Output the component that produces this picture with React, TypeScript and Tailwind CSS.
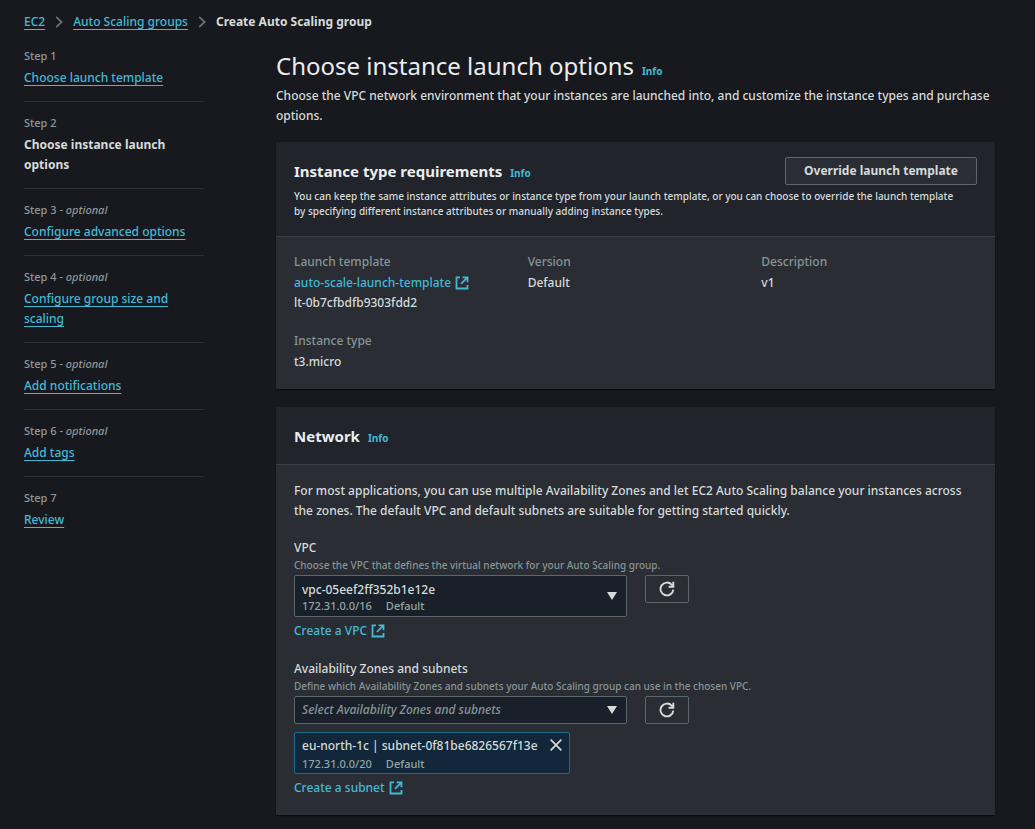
import type { ReactNode } from 'react'

type Step = { label: string; title: string; optional?: boolean; current?: boolean }

const steps: Step[] = [
  { label: 'Step 1', title: 'Choose launch template' },
  { label: 'Step 2', title: 'Choose instance launch options', current: true },
  { label: 'Step 3', title: 'Configure advanced options', optional: true },
  { label: 'Step 4', title: 'Configure group size and scaling', optional: true },
  { label: 'Step 5', title: 'Add notifications', optional: true },
  { label: 'Step 6', title: 'Add tags', optional: true },
  { label: 'Step 7', title: 'Review' },
]

const navLink = 'text-[#44b9d6] underline decoration-1 underline-offset-[3px] [text-decoration-skip-ink:none]'

function Chevron() {
  return (
    <svg aria-hidden="true" viewBox="0 0 8 12" className="mx-2.5 h-3 w-2 shrink-0" fill="none" stroke="#687078" strokeWidth="1.8">
      <path d="M1.2 .8 6.6 6 1.2 11.2" />
    </svg>
  )
}

function ExternalIcon() {
  return (
    <svg aria-hidden="true" viewBox="0 0 14 14" className="size-3.5 shrink-0" fill="none" stroke="currentColor" strokeWidth="1.8">
      <path d="M5 1.3H1.5v11.2h11V9" />
      <path d="M7.6 1.3h4.9v4.9M12.2 1.6 6 7.8" />
    </svg>
  )
}

function RefreshButton({ label }: { label: string }) {
  return (
    <button type="button" aria-label={label} className="flex h-7 w-11 items-center justify-center rounded-[2px] border border-[#5c666b] bg-[#2a2d34]">
      <svg aria-hidden="true" viewBox="0 0 16 16" className="size-4" fill="none" stroke="#d5dbdb" strokeWidth="1.9">
        <path d="M14.3 8.6A6.4 6.4 0 1 1 12.7 3.7l1.4 1.6" />
        <path d="M14.3 .8v4.9H9.6" />
      </svg>
    </button>
  )
}

function Info() {
  return (
    <a href="#info" className="text-[10px] leading-3 font-bold text-[#44b9d6]">
      Info
    </a>
  )
}

function ExternalLink({ children }: { children: ReactNode }) {
  return (
    <a href="#external" className="inline-flex items-center gap-1 font-medium text-[#44b9d6]">
      {children}
      <ExternalIcon />
    </a>
  )
}

function Card({ title, action, description, children }: { title: string; action?: ReactNode; description?: string; children: ReactNode }) {
  return (
    <section className="bg-[#2a2d34] shadow-[0_1px_1px_0_#0b0c0f]">
      <header className={`border-b border-[#3b4048] bg-[#21242b] px-[18px] pt-[15px] ${description ? 'pb-[17px]' : 'pb-3.5'}`}>
        <div className="flex h-7 items-center justify-between">
          <div className="flex items-baseline gap-2">
            <h2 className="text-[15px] leading-5 font-bold text-[#eaeded]">{title}</h2>
            <Info />
          </div>
          {action}
        </div>
        {description && <p className="mt-1 pr-3.5 text-[10px] leading-[15px] text-[#d5dbdb]">{description}</p>}
      </header>
      {children}
    </section>
  )
}

function Detail({ label, children }: { label: string; children: ReactNode }) {
  return (
    <div>
      <dt className="text-[#879596]">{label}</dt>
      <dd className="mt-px flex flex-col items-start">{children}</dd>
    </div>
  )
}

function Arrow() {
  return (
    <svg aria-hidden="true" viewBox="0 0 10 8" className="pointer-events-none absolute top-1/2 right-2.5 h-2 w-2.5 -translate-y-1/2" fill="#d5dbdb">
      <path d="M0 0h10L5 8z" />
    </svg>
  )
}

const fieldGrid = 'mt-0.5 grid grid-cols-2 items-start gap-[18px]'
const helper = 'text-[10px] leading-[15px] text-[#879596]'

export default function App() {
  return (
    <div className="min-h-screen bg-[#18191e] pt-3 pr-10 pb-3 pl-6 font-['Noto_Sans',sans-serif] text-xs leading-5 font-medium text-[#d5dbdb]">
      <nav aria-label="Breadcrumb" className="flex items-center">
        <a href="#ec2" className={navLink}>EC2</a>
        <Chevron />
        <a href="#groups" className={navLink}>Auto Scaling groups</a>
        <Chevron />
        <span className="font-bold">Create Auto Scaling group</span>
      </nav>

      <div className="flex gap-[72px]">
        <nav aria-label="Steps" className="mt-4 w-[180px] shrink-0">
          <ol>
            {steps.map((s) => (
              <li key={s.label} className="mb-[13px] border-b border-[#2f3138] pb-[13px] last:border-b-0">
                <p className="mb-1 text-[11px] leading-4 text-[#8d9899]">
                  {s.label}
                  {s.optional && <> - <i>optional</i></>}
                </p>
                {s.current ? (
                  <p aria-current="step" className="font-bold">{s.title}</p>
                ) : (
                  <p><a href="#step" className={navLink}>{s.title}</a></p>
                )}
              </li>
            ))}
          </ol>
        </nav>

        <main className="mt-[18px] min-w-0 flex-1">
          <div className="flex items-baseline gap-2">
            <h1 className="text-2xl leading-8 font-normal text-[#eaeded]">Choose instance launch options</h1>
            <Info />
          </div>
          <p className="mt-1 mb-4">
            Choose the VPC network environment that your instances are launched into, and customize the instance types and purchase options.
          </p>

          <div className="flex flex-col gap-[18px]">
            <Card
              title="Instance type requirements"
              description="You can keep the same instance attributes or instance type from your launch template, or you can choose to override the launch template by specifying different instance attributes or manually adding instance types."
              action={
                <button type="button" className="h-7 rounded-[2px] border border-[#5c666b] bg-[#2a2d34] px-[18px] font-bold text-[#d5dbdb]">
                  Override launch template
                </button>
              }
            >
              <dl className="grid grid-cols-3 gap-[18px] px-[18px] pt-[15px] pb-[17px]">
                <Detail label="Launch template">
                  <ExternalLink>auto-scale-launch-template</ExternalLink>
                  <span>lt-0b7cfbdfb9303fdd2</span>
                </Detail>
                <Detail label="Version">Default</Detail>
                <Detail label="Description">v1</Detail>
                <Detail label="Instance type">t3.micro</Detail>
              </dl>
            </Card>

            <Card title="Network">
              <div className="px-[18px] pt-4 pb-[17px]">
                <p>
                  For most applications, you can use multiple Availability Zones and let EC2 Auto Scaling balance your instances across the zones. The default VPC and default subnets are suitable for getting started quickly.
                </p>

                <div className="mt-[17px]">
                  <label htmlFor="vpc" className="block">VPC</label>
                  <p className={helper}>Choose the VPC that defines the virtual network for your Auto Scaling group.</p>
                  <div className={fieldGrid}>
                    <div className="relative">
                      <select id="vpc" className="block h-[42px] w-full appearance-none rounded-[2px] border border-[#5c666b] bg-[#1a2029] pr-8 pb-3 pl-[7px] font-medium text-[#d5dbdb]">
                        <option>vpc-05eef2ff352b1e12e</option>
                      </select>
                      <span className="pointer-events-none absolute bottom-1 left-2 flex gap-3.5 text-[11px] leading-[15px] text-[#95a5a6]">
                        <span>172.31.0.0/16</span>
                        <span>Default</span>
                      </span>
                      <Arrow />
                    </div>
                    <RefreshButton label="Refresh VPCs" />
                  </div>
                  <div className="mt-1 flex"><ExternalLink>Create a VPC</ExternalLink></div>
                </div>

                <div className="mt-[18px]">
                  <label htmlFor="zones" className="block">Availability Zones and subnets</label>
                  <p className={helper}>Define which Availability Zones and subnets your Auto Scaling group can use in the chosen VPC.</p>
                  <div className={fieldGrid}>
                    <div className="relative">
                      <select id="zones" className="block h-7 w-full appearance-none rounded-[2px] border border-[#5c666b] bg-[#1a2029] pr-8 pl-[7px] font-medium text-[#879596] italic">
                        <option>Select Availability Zones and subnets</option>
                      </select>
                      <Arrow />
                    </div>
                    <RefreshButton label="Refresh subnets" />
                  </div>
                  <div className="mt-2 flex">
                    <div className="flex h-[42px] items-start gap-3 rounded-[2px] border border-[#14708c] bg-[#12283a] px-[7px] pt-[3px]">
                      <div>
                        <p>eu-north-1c | subnet-0f81be6826567f13e</p>
                        <p className="flex gap-3.5 text-[11px] leading-[15px] text-[#95a5a6]">
                          <span>172.31.0.0/20</span>
                          <span>Default</span>
                        </p>
                      </div>
                      <button type="button" aria-label="Remove subnet" className="mt-[3px]">
                        <svg aria-hidden="true" viewBox="0 0 12 12" className="size-3" fill="none" stroke="#d5dbdb" strokeWidth="1.7">
                          <path d="m.7.7 10.6 10.6M11.3.7.7 11.3" />
                        </svg>
                      </button>
                    </div>
                  </div>
                  <div className="mt-1 flex"><ExternalLink>Create a subnet</ExternalLink></div>
                </div>
              </div>
            </Card>
          </div>
        </main>
      </div>
    </div>
  )
}
